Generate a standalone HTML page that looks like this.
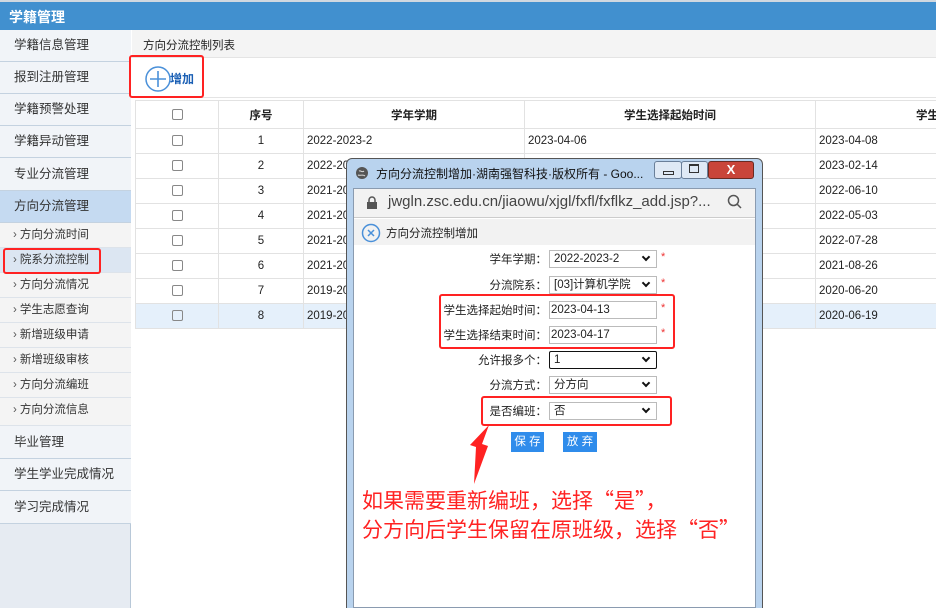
<!DOCTYPE html>
<html><head><meta charset="utf-8"><style>
*{margin:0;padding:0;box-sizing:border-box}
html,body{width:936px;height:608px;overflow:hidden}
body{position:relative;background:#fff;font-family:"Liberation Sans","Noto Sans CJK SC",sans-serif;font-size:12px;color:#222}
.abs{position:absolute}
.hdr{left:0;top:0;width:936px;height:30px;background:#4190cf;border-top:2px solid #d0d8e0}
.hdr span{position:absolute;left:9px;top:5px;color:#fff;font-weight:bold;font-size:14px}
.side{left:0;top:30px;width:131px;height:578px;background:#e6ebf2;border-right:1px solid #b8c8d8}
.it{position:absolute;left:0;width:131px;border-bottom:1px solid #c4d2e0;background:#f1f4f8;font-size:12.5px;padding-left:14px;color:#333}
.sub{position:absolute;left:0;width:131px;border-bottom:1px solid #dde3ea;background:#f4f4f4;font-size:11.5px;padding-left:13px;color:#333;height:25px;line-height:24px}
.sub:before{content:"›";margin-right:3px;color:#555}
table{border-collapse:collapse;position:absolute;left:135px;top:100px;table-layout:fixed;width:880px}
td{border:1px solid #e2e2e2;height:25px;font-size:11.5px;padding:0 3px;white-space:nowrap;overflow:hidden}
th{border:1px solid #e2e2e2;height:28px;font-size:11.5px;font-weight:bold}
.cb{display:inline-block;width:11px;height:11px;border:1px solid #888;border-radius:2px;vertical-align:middle}
.lbl{position:absolute;right:389px;font-size:11.5px;color:#222;text-align:right}
.sel{position:absolute;left:549px;width:108px;height:18px;border:1px solid #bbb;font-size:11.5px;padding-left:4px;line-height:16px;background:#fff}
.sel i{position:absolute;right:7px;top:3px;width:6px;height:6px;border-right:2px solid #111;border-bottom:2px solid #111;transform:rotate(45deg)}
.ast{position:absolute;left:661px;color:#e33;font-size:11px}
.red{position:absolute;border:2.5px solid #f22;border-radius:3px}
.btn{position:absolute;top:432px;height:20px;width:33px;background:#2f8ceb;color:#fff;font-size:11.5px;text-align:center;line-height:20px;white-space:pre}
</style></head><body>
<div class="abs hdr"><span>学籍管理</span></div>
<div class="abs side">
<div class="it" style="top:0;height:32px;line-height:31px">学籍信息管理</div>
<div class="it" style="top:32px;height:32px;line-height:31px">报到注册管理</div>
<div class="it" style="top:64px;height:32px;line-height:31px">学籍预警处理</div>
<div class="it" style="top:96px;height:32px;line-height:31px">学籍异动管理</div>
<div class="it" style="top:128px;height:33px;line-height:32px">专业分流管理</div>
<div class="it" style="top:161px;height:32px;line-height:31px;background:#c5daf1">方向分流管理</div>
<div class="sub" style="top:193px">方向分流时间</div>
<div class="sub" style="top:218px;background:#dce6f2">院系分流控制</div>
<div class="sub" style="top:243px">方向分流情况</div>
<div class="sub" style="top:268px">学生志愿查询</div>
<div class="sub" style="top:293px">新增班级申请</div>
<div class="sub" style="top:318px">新增班级审核</div>
<div class="sub" style="top:343px">方向分流编班</div>
<div class="sub" style="top:368px;height:28px">方向分流信息</div>
<div class="it" style="top:396px;height:33px;line-height:32px">毕业管理</div>
<div class="it" style="top:429px;height:32px;line-height:31px">学生学业完成情况</div>
<div class="it" style="top:461px;height:33px;line-height:32px">学习完成情况</div>
</div>
<div class="abs" style="left:132px;top:30px;width:804px;height:28px;background:#f4f4f4;border-bottom:1px solid #e4e4e4;padding:7px 0 0 11px;font-size:11.5px">方向分流控制列表</div>
<div class="abs" style="left:132px;top:60px;width:804px;height:38px;border-bottom:1px solid #e4e4e4"></div>
<svg class="abs" style="left:144px;top:65px" width="28" height="28"><circle cx="14" cy="14" r="12" fill="none" stroke="#4a90d9" stroke-width="1.5"/><path d="M14 6v16M6 14h16" stroke="#4a90d9" stroke-width="1.6"/></svg>
<div class="abs" style="left:170px;top:70px;color:#1a5fb4;font-size:12px;font-weight:bold">增加</div>
<div class="red" style="left:129px;top:55px;width:75px;height:43px"></div>
<div class="red" style="left:3px;top:248px;width:98px;height:26px"></div>
<table>
<colgroup><col style="width:83px"><col style="width:85px"><col style="width:221px"><col style="width:291px"><col style="width:200px"></colgroup>
<tr><th><span class="cb"></span></th><th>序号</th><th>学年学期</th><th>学生选择起始时间</th><th style="text-align:left;padding-left:100px">学生</th></tr>
<tr><td align=center><span class="cb"></span></td><td align=center>1</td><td>2022-2023-2</td><td>2023-04-06</td><td>2023-04-08</td></tr>
<tr><td align=center><span class="cb"></span></td><td align=center>2</td><td>2022-2023-2</td><td></td><td>2023-02-14</td></tr>
<tr><td align=center><span class="cb"></span></td><td align=center>3</td><td>2021-2022-2</td><td></td><td>2022-06-10</td></tr>
<tr><td align=center><span class="cb"></span></td><td align=center>4</td><td>2021-2022-2</td><td></td><td>2022-05-03</td></tr>
<tr><td align=center><span class="cb"></span></td><td align=center>5</td><td>2021-2022-1</td><td></td><td>2022-07-28</td></tr>
<tr><td align=center><span class="cb"></span></td><td align=center>6</td><td>2021-2022-1</td><td></td><td>2021-08-26</td></tr>
<tr><td align=center><span class="cb"></span></td><td align=center>7</td><td>2019-2020-2</td><td></td><td>2020-06-20</td></tr>
<tr style="background:#e5f0fb"><td align=center><span class="cb"></span></td><td align=center>8</td><td>2019-2020-2</td><td></td><td>2020-06-19</td></tr>
</table>
<!-- dialog -->
<div class="abs" style="left:346px;top:158px;width:417px;height:455px;background:#b9d3ee;border:1px solid #555;border-radius:6px 6px 0 0"></div>
<svg class="abs" style="left:355px;top:166px" width="14" height="14"><circle cx="7" cy="7" r="6" fill="#555"/><path d="M4 5c2-1 3 2 5 0M3 9c2 1 5-1 7 1" stroke="#ddd" fill="none"/></svg>
<div class="abs" style="left:376px;top:165px;font-size:12px;color:#111">方向分流控制增加·湖南强智科技·版权所有 - Goo...</div>
<div class="abs" style="left:654px;top:161px;width:28px;height:18px;border:1px solid #6a7f99;border-radius:3px;background:#dfe9f5"></div>
<div class="abs" style="left:663px;top:171px;width:11px;height:4px;border:1px solid #333"></div>
<div class="abs" style="left:681px;top:161px;width:27px;height:18px;border:1px solid #6a7f99;border-radius:3px;background:#dfe9f5"></div>
<div class="abs" style="left:689px;top:164px;width:10px;height:9px;border:1px solid #333;border-top-width:2px"></div>
<div class="abs" style="left:708px;top:161px;width:46px;height:18px;border:1px solid #6a2a22;border-radius:3px;background:#c9453a;color:#fff;font-weight:bold;text-align:center;line-height:16px;font-size:13px">X</div>
<div class="abs" style="left:353px;top:188px;width:403px;height:420px;background:#fff;border:1px solid #8a9bb0"></div>
<div class="abs" style="left:354px;top:189px;width:401px;height:29px;background:#f2f2f2;border-bottom:1px solid #ccc"></div>
<svg class="abs" style="left:366px;top:196px" width="12" height="14"><rect x="1" y="6" width="10" height="7" fill="#555"/><path d="M3 6V4a3 3 0 016 0v2" stroke="#555" fill="none" stroke-width="1.5"/></svg>
<div class="abs" style="left:388px;top:193px;font-size:15px;color:#444">jwgln.zsc.edu.cn/jiaowu/xjgl/fxfl/fxflkz_add.jsp?...</div>
<svg class="abs" style="left:727px;top:194px" width="16" height="16"><circle cx="6.5" cy="6.5" r="5" fill="none" stroke="#555" stroke-width="1.5"/><path d="M10 10l4 4" stroke="#555" stroke-width="1.5"/></svg>
<div class="abs" style="left:354px;top:219px;width:401px;height:26px;background:#f2f2f2"></div>
<svg class="abs" style="left:361px;top:223px" width="20" height="20"><circle cx="10" cy="10" r="8.5" fill="none" stroke="#4a90d9" stroke-width="1.5"/><path d="M7 7l6 6M13 7l-6 6" stroke="#4a90d9" stroke-width="1.5"/></svg>
<div class="abs" style="left:386px;top:225px;font-size:11.5px">方向分流控制增加</div>
<div class="lbl" style="top:251px">学年学期：</div><div class="sel" style="top:250px">2022-2023-2<i></i></div><div class="ast" style="top:251px">*</div>
<div class="lbl" style="top:277px">分流院系：</div><div class="sel" style="top:276px">[03]计算机学院<i></i></div><div class="ast" style="top:277px">*</div>
<div class="lbl" style="top:302px">学生选择起始时间：</div><div class="sel" style="top:301px;padding-left:1px">2023-04-13</div><div class="ast" style="top:302px">*</div>
<div class="lbl" style="top:327px">学生选择结束时间：</div><div class="sel" style="top:326px;padding-left:1px">2023-04-17</div><div class="ast" style="top:327px">*</div>
<div class="lbl" style="top:352px">允许报多个：</div><div class="sel" style="top:351px;border:1.5px solid #111;border-radius:2px">1<i></i></div>
<div class="lbl" style="top:377px">分流方式：</div><div class="sel" style="top:376px">分方向<i></i></div>
<div class="lbl" style="top:403px">是否编班：</div><div class="sel" style="top:402px">否<i></i></div>
<div class="red" style="left:439px;top:294px;width:236px;height:55px"></div>
<div class="red" style="left:481px;top:396px;width:191px;height:30px"></div>
<div class="btn" style="left:511px">保 存</div>
<div class="btn" style="left:563px;width:34px">放 弃</div>
<svg class="abs" style="left:460px;top:420px" width="40" height="70"><path d="M29 5L22 24 28 26 14 64 16 27 10 25Z" fill="#f22"/></svg>
<div class="abs" style="left:362px;top:486px;color:#f22;font-family:'WenQuanYi Zen Hei','Noto Sans CJK SC',sans-serif;font-size:21px;line-height:29px;white-space:nowrap">如果需要重新编班，选择“是”，<br>分方向后学生保留在原班级，选择“否”</div>
</body></html>
